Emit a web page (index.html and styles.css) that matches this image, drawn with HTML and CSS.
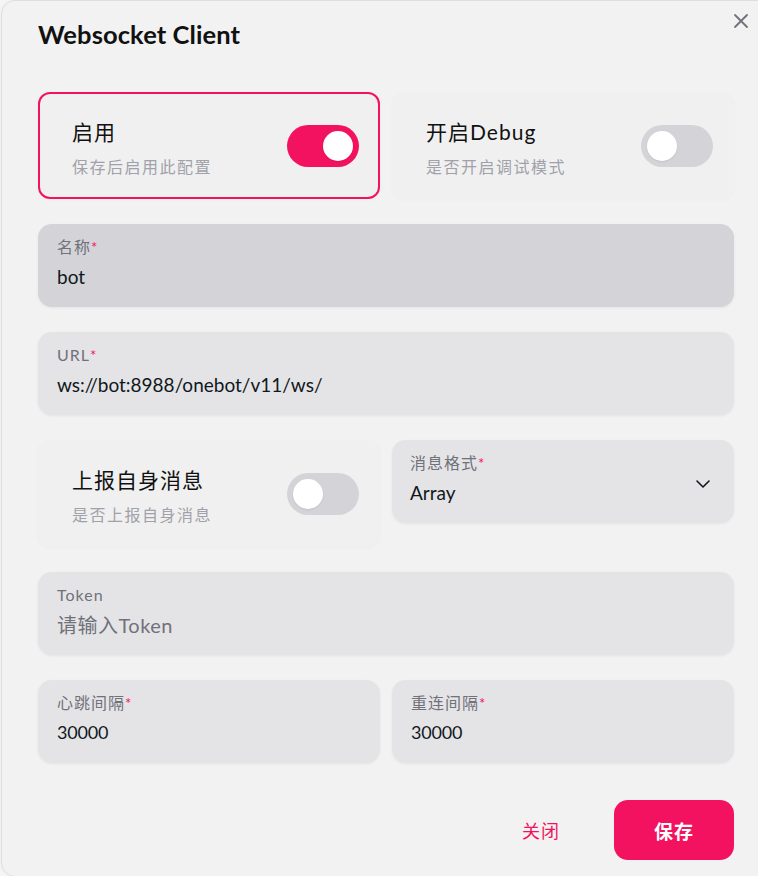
FILE: index.html
```html
<!DOCTYPE html>
<html lang="zh-CN">
<head>
<meta charset="utf-8">
<title>Websocket Client</title>
<link rel="stylesheet" href="styles.css">
</head>
<body>
<div class="modal">
  <button class="close-btn" aria-label="close">
    <svg width="16" height="16" viewBox="0 0 16 16"><path d="M2 2 L14 14 M14 2 L2 14" stroke="#71717a" stroke-width="1.8" stroke-linecap="round" fill="none"/></svg>
  </button>
  <h1 class="title">Websocket Client</h1>
  <div class="form">
    <div class="row two">
      <div class="switch-card active">
        <div class="sw-text">
          <div class="sw-title">启用</div>
          <div class="sw-desc">保存后启用此配置</div>
        </div>
        <span class="toggle on"><span class="thumb"></span></span>
      </div>
      <div class="switch-card">
        <div class="sw-text">
          <div class="sw-title">开启Debug</div>
          <div class="sw-desc">是否开启调试模式</div>
        </div>
        <span class="toggle"><span class="thumb"></span></span>
      </div>
    </div>
    <div class="field hover">
      <div class="label">名称<span class="req">*</span></div>
      <div class="value">bot</div>
    </div>
    <div class="field">
      <div class="label">URL<span class="req">*</span></div>
      <div class="value">ws://bot:8988/onebot/v11/ws/</div>
    </div>
    <div class="row two">
      <div class="switch-card">
        <div class="sw-text">
          <div class="sw-title">上报自身消息</div>
          <div class="sw-desc">是否上报自身消息</div>
        </div>
        <span class="toggle"><span class="thumb"></span></span>
      </div>
      <div class="field select">
        <div class="sel-main">
          <div class="label">消息格式<span class="req">*</span></div>
          <div class="value">Array</div>
        </div>
        <svg class="chevron" width="16" height="10" viewBox="0 0 16 10"><path d="M2 2 L8 8 L14 2" stroke="#11181c" stroke-width="1.6" fill="none" stroke-linecap="round" stroke-linejoin="round"/></svg>
      </div>
    </div>
    <div class="field">
      <div class="label">Token</div>
      <div class="value placeholder">请输入Token</div>
    </div>
    <div class="row two">
      <div class="field">
        <div class="label">心跳间隔<span class="req">*</span></div>
        <div class="value num">30000</div>
      </div>
      <div class="field">
        <div class="label">重连间隔<span class="req">*</span></div>
        <div class="value num">30000</div>
      </div>
    </div>
  </div>
  <div class="footer">
    <button class="btn ghost">关闭</button>
    <button class="btn primary">保存</button>
  </div>
</div>
</body>
</html>
```

FILE: styles.css
```css
* { box-sizing: border-box; }
html, body { margin: 0; padding: 0; }
body {
  background: #f6f6f6;
  overflow: hidden;
  font-family: "Lato", "Noto Sans CJK SC", sans-serif;
  color: #11181c;
}
.modal {
  position: relative;
  margin-left: 1px;
  width: 800px;
  height: 877px;
  background: #f2f2f2;
  border: 1px solid #dedede;
  border-radius: 14px;
  padding: 18px 0 0 36px;
  box-shadow: 0 0 6px rgba(0,0,0,0.04);
}
.close-btn {
  position: absolute;
  top: 11px;
  left: 730px;
  width: 18px;
  height: 18px;
  padding: 0;
  border: 0;
  background: transparent;
  display: flex;
  align-items: center;
  justify-content: center;
}
.title {
  margin: 0;
  font-size: 25.5px;
  line-height: 30px;
  font-weight: 700;
  color: #111;
  letter-spacing: 0.1px;
}
.form {
  width: 696px;
  margin-top: 43px;
  display: flex;
  flex-direction: column;
  gap: 25px;
}
.row.two {
  display: grid;
  grid-template-columns: 342px 342px;
  gap: 12px;
}
.switch-card {
  height: 107px;
  border: 2px solid transparent;
  border-radius: 12px;
  background: #f0f0f0;
  box-shadow: 0 1px 4px rgba(0,0,0,0.025);
  display: flex;
  align-items: center;
  justify-content: space-between;
  padding: 0 19px 0 32px;
}
.switch-card.active {
  border-color: #f31260;
}
.sw-text {
  display: flex;
  flex-direction: column;
  gap: 10px;
  padding-top: 4px;
}
.sw-title {
  font-size: 21px;
  line-height: 28px;
  color: #111;
  letter-spacing: 1px;
}
.sw-desc {
  font-size: 16px;
  line-height: 22px;
  color: #a1a1aa;
  letter-spacing: 1.5px;
}
.toggle {
  width: 72px;
  height: 42px;
  border-radius: 21px;
  background: #d4d4d8;
  display: flex;
  align-items: center;
  padding: 0 6px;
  flex-shrink: 0;
}
.toggle .thumb {
  width: 30px;
  height: 30px;
  border-radius: 50%;
  background: #fff;
  box-shadow: 0 1px 2px rgba(0,0,0,0.08);
}
.toggle.on {
  background: #f31260;
  justify-content: flex-end;
}
.field {
  height: 83px;
  border-radius: 14px;
  background: #e4e4e7;
  box-shadow: 0 1px 3px rgba(0,0,0,0.06);
  padding: 14px 19px 0 19px;
}
.field.hover { background: #d4d4d8; }
.label {
  font-size: 16px;
  line-height: 18px;
  color: #71717a;
  letter-spacing: 1px;
}
.req {
  color: #f31260;
  margin-left: 0;
  font-size: 15px;
}
.value {
  margin-top: 9px;
  font-size: 19px;
  line-height: 24px;
  color: #11181c;
}
.value.placeholder {
  color: #71717a;
  font-size: 20px;
  letter-spacing: 0.5px;
}
.value.num { font-size: 18px; letter-spacing: -0.2px; margin-top: 8px; }
.field.select {
  display: flex;
  justify-content: space-between;
  align-items: flex-start;
  padding: 14px 23px 0 18px;
}
.chevron { margin-top: 25px; }
.footer {
  width: 696px;
  margin-top: 37px;
  display: flex;
  justify-content: flex-end;
  align-items: center;
  gap: 33px;
}
.btn {
  height: 60px;
  border: 0;
  border-radius: 14px;
  font-family: "Lato", "Noto Sans CJK SC", sans-serif;
  font-size: 18px;
  letter-spacing: 1px;
  cursor: pointer;
}
.btn.ghost {
  width: 80px;
  background: transparent;
  color: #f31260;
}
.btn.primary {
  width: 120px;
  background: #f31260;
  color: #fff;
  font-size: 19px;
  font-weight: 700;
}
```
